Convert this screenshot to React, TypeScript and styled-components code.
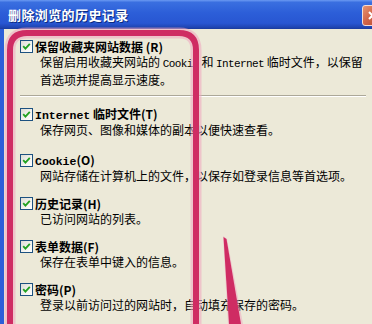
import React from "react";
import styled, { createGlobalStyle } from "styled-components";

const Global = createGlobalStyle`
  html, body { margin: 0; padding: 0; overflow: hidden; background: #ECE9D8; }
  body { width: 372px; height: 324px; }
`;

const Viewport = styled.div`
  width: 372px;
  height: 324px;
  overflow: hidden;
  position: relative;
`;

const Window = styled.div`
  width: 386px;
  height: 324px;
  display: flex;
  flex-direction: column;
  font-family: "Noto Sans CJK SC", "Noto Sans", sans-serif;
  color: #000;
`;

const TitleBar = styled.div`
  height: 29px;
  flex: none;
  display: flex;
  align-items: center;
  justify-content: space-between;
  padding: 0 3px 0 8px;
  box-sizing: border-box;
  background: linear-gradient(
    to bottom,
    #6b9af2 0%,
    #3a6fe0 8%,
    #2c5ed8 45%,
    #2856d2 80%,
    #1f45b3 94%,
    #1a3a9c 100%
  );
`;

const Title = styled.div`
  color: #fff;
  font-weight: bold;
  font-size: 13px;
  letter-spacing: 0.4px;
  text-shadow: 1px 1px 0 #0b2a80;
  white-space: nowrap;
`;

const CloseButton = styled.div`
  width: 21px;
  height: 21px;
  box-sizing: border-box;
  border: 1px solid #f4ddd4;
  border-radius: 3px;
  background: linear-gradient(135deg, #e7946f 0%, #d2674a 45%, #b8452d 100%);
  display: flex;
  align-items: center;
  justify-content: center;
  margin-top: 1px;
`;

const Body = styled.div`
  flex: 1;
  display: flex;
  flex-direction: column;
  border-left: 4px solid #2c5ed8;
  background: #ece9d8;
  padding: 10px 0 0 16px;
`;

const Option = styled.div<{ $gap: number }>`
  display: flex;
  flex-direction: column;
  margin-top: ${(p) => p.$gap}px;
`;

const LabelRow = styled.div`
  display: flex;
  align-items: center;
  height: 15px;
  gap: 2px;
`;

const Box = styled.div`
  width: 13px;
  height: 13px;
  box-sizing: border-box;
  border: 1px solid #1c5180;
  background: linear-gradient(135deg, #dcdcd5 0%, #f4f4f0 60%, #ffffff 100%);
  display: flex;
  align-items: center;
  justify-content: center;
  flex: none;
`;

const Label = styled.span`
  font-size: 12px;
  font-weight: bold;
  line-height: 15px;
  white-space: nowrap;
`;

const Latin = styled.span<{ $bold?: boolean }>`
  font-family: "Liberation Mono", monospace;
  font-size: ${(p) => (p.$bold ? "11.5px" : "11px")};
  letter-spacing: ${(p) => (p.$bold ? "0" : "-0.6px")};
  font-weight: ${(p) => (p.$bold ? "bold" : "normal")};
`;

const Desc = styled.div`
  padding-left: 20px;
  font-size: 12px;
  line-height: 15px;
  white-space: nowrap;
`;

const Separator = styled.div`
  height: 1px;
  background: #aca899;
  border-bottom: 1px solid #fff;
  margin: 8px 20px 0 0;
`;

const Annotation = styled.svg`
  position: absolute;
  left: 0;
  top: 0;
  pointer-events: none;
`;

const Check = () => (
  <Box>
    <svg width="9" height="9" viewBox="0 0 9 9">
      <path d="M1.2 4.2 L3.4 6.6 L7.8 1.8" fill="none" stroke="#21a121" strokeWidth="1.8" />
    </svg>
  </Box>
);

type Item = { label: React.ReactNode; desc: React.ReactNode[]; gap: number };

const rest: Item[] = [
  {
    label: (
      <>
        <Latin $bold>Internet</Latin> 临时文件(T)
      </>
    ),
    desc: ["保存网页、图像和媒体的副本以便快速查看。"],
    gap: 10,
  },
  {
    label: (
      <>
        <Latin $bold>Cookie</Latin>(O)
      </>
    ),
    desc: ["网站存储在计算机上的文件，以保存如登录信息等首选项。"],
    gap: 16,
  },
  { label: <>历史记录(H)</>, desc: ["已访问网站的列表。"], gap: 13 },
  { label: <>表单数据(F)</>, desc: ["保存在表单中键入的信息。"], gap: 13 },
  { label: <>密码(P)</>, desc: ["登录以前访问过的网站时，自动填充保存的密码。"], gap: 13 },
];

export default function App() {
  return (
    <Viewport>
      <Global />
      <Window>
        <TitleBar>
          <Title>删除浏览的历史记录</Title>
          <CloseButton>
            <svg width="11" height="11" viewBox="0 0 11 11">
              <path d="M2 2 L9 9 M9 2 L2 9" stroke="#fff" strokeWidth="2" />
            </svg>
          </CloseButton>
        </TitleBar>
        <Body>
          <Option $gap={0}>
            <LabelRow>
              <Check />
              <Label>保留收藏夹网站数据 (R)</Label>
            </LabelRow>
            <Desc>
              保留启用收藏夹网站的 <Latin>Cookie</Latin> 和 <Latin>Internet</Latin> 临时文件，以保留
            </Desc>
            <Desc>首选项并提高显示速度。</Desc>
          </Option>
          <Separator />
          {rest.map((it, i) => (
            <Option key={i} $gap={it.gap}>
              <LabelRow>
                <Check />
                <Label>{it.label}</Label>
              </LabelRow>
              {it.desc.map((d, j) => (
                <Desc key={j}>{d}</Desc>
              ))}
            </Option>
          ))}
        </Body>
      </Window>
      <Annotation width="372" height="324" viewBox="0 0 372 324">
        <path
          d="M10 340 L10 50 Q10 33 27 33 L179 33 Q196 33 196 50 L196 340"
          fill="none"
          stroke="#f0a6bf"
          strokeOpacity="0.55"
          strokeWidth="11"
        />
        <path
          d="M10 340 L10 50 Q10 33 27 33 L179 33 Q196 33 196 50 L196 340"
          fill="none"
          stroke="#cf2c63"
          strokeWidth="6"
        />
        <path d="M223 236 L227 239 L243 324 L228 324 Z" fill="#f0a6bf" fillOpacity="0.5" />
        <path d="M223.5 237 L226.5 239 L241 324 L229 324 Z" fill="#cf2c63" />
      </Annotation>
    </Viewport>
  );
}
